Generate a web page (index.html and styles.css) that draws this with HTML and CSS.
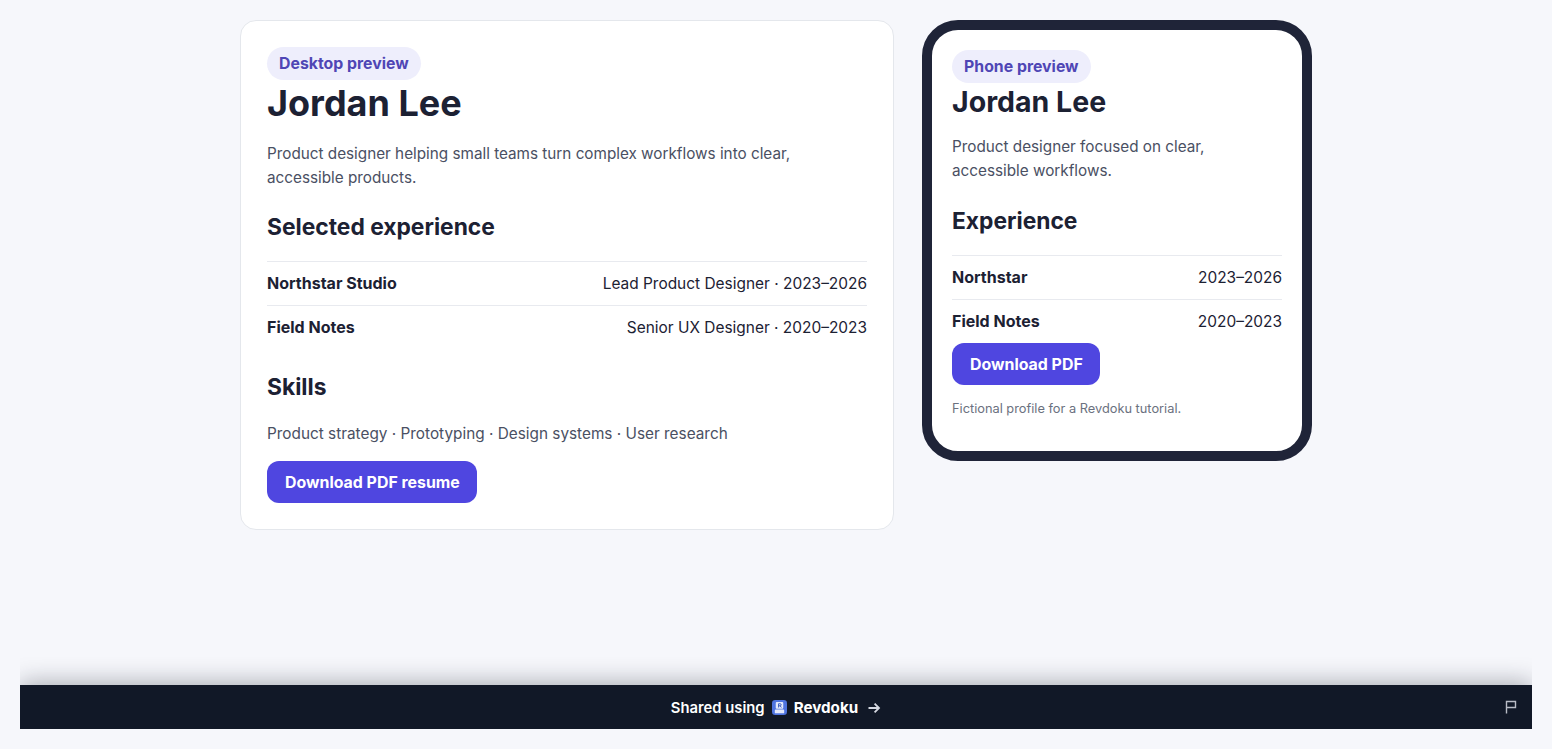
FILE: index.html
```html
<!DOCTYPE html>
<html lang="en">
<head>
    <meta charset="UTF-8">
    <meta name="viewport" content="width=device-width, initial-scale=1.0">
    <title>Jordan Lee - Resume preview</title>
    <link rel="stylesheet" href="styles.css">
</head>
<body>
    <main class="previews">
        <section class="card desktop">
            <span class="badge">Desktop preview</span>
            <h1>Jordan Lee</h1>
            <p class="intro">Product designer helping small teams turn complex workflows into clear, accessible products.</p>
            <h2>Selected experience</h2>
            <div class="row"><strong>Northstar Studio</strong><span>Lead Product Designer · 2023–2026</span></div>
            <div class="row"><strong>Field Notes</strong><span>Senior UX Designer · 2020–2023</span></div>
            <h2 class="skills-title">Skills</h2>
            <p class="skills">Product strategy · Prototyping · Design systems · User research</p>
            <a class="button" href="#">Download PDF resume</a>
        </section>
        <section class="card phone">
            <span class="badge">Phone preview</span>
            <h1>Jordan Lee</h1>
            <p class="intro">Product designer focused on clear, accessible workflows.</p>
            <h2>Experience</h2>
            <div class="row"><strong>Northstar</strong><span>2023–2026</span></div>
            <div class="row"><strong>Field Notes</strong><span>2020–2023</span></div>
            <a class="button" href="#">Download PDF</a>
            <p class="note">Fictional profile for a Revdoku tutorial.</p>
        </section>
    </main>
    <div class="share-wrap">
        <footer class="share-bar">
            <a class="share-link" href="#">
                <span>Shared using</span>
                <svg class="logo" viewBox="0 0 16 16" aria-hidden="true">
                    <rect width="16" height="16" rx="3.5" fill="#4f74e0"/>
                    <rect x="4" y="2.2" width="8" height="7" rx="1" fill="#e4eafc"/>
                    <rect x="3" y="10.2" width="10" height="4" rx="1" fill="#e4eafc"/>
                    <path d="M7 8V4h1.7a1.1 1.1 0 0 1 0 2.2H7M8.7 6.2 10 8" fill="none" stroke="#3557bd" stroke-width="1"/>
                </svg>
                <span class="brand">Revdoku</span>
                <svg class="arrow" viewBox="0 0 14 14" aria-hidden="true">
                    <path d="M1.5 7h10.5M7.6 2.6 12 7l-4.4 4.4" fill="none" stroke="currentColor" stroke-width="1.8"/>
                </svg>
            </a>
            <svg class="flag" viewBox="0 0 12 14" aria-hidden="true">
                <path d="M1.5 13.5V1.5h9v6h-9" fill="none" stroke="currentColor" stroke-width="1.4"/>
            </svg>
        </footer>
    </div>
</body>
</html>
```
FILE: styles.css
```css
* {
    box-sizing: border-box;
}
body {
    font-family: Inter, "Noto Sans", sans-serif;
    margin: 0;
    padding: 20px;
    min-height: 749px;
    background-color: #f6f7fb;
    color: #1c2133;
    display: flex;
    flex-direction: column;
    font-size: 15.35px;
    line-height: 24px;
}
.previews {
    display: flex;
    justify-content: center;
    align-items: flex-start;
    gap: 28px;
}
.card {
    background: white;
}
.desktop {
    width: 654px;
    height: 510px;
    padding: 26px;
    border: 1px solid #e4e7ec;
    border-radius: 16px;
}
.phone {
    width: 390px;
    height: 441px;
    padding: 20px;
    border: 10px solid #1f2438;
    border-radius: 36px;
}
.badge {
    display: inline-block;
    padding: 4px 12px;
    border-radius: 999px;
    background: #eeeefc;
    color: #4f46b5;
    font-size: 15.85px;
    line-height: 25px;
    font-weight: 650;
}
h1 {
    margin: 0;
    font-size: 36px;
    line-height: 46px;
    font-weight: 700;
}
.phone h1 {
    font-size: 28.5px;
    line-height: 38px;
}
.intro {
    margin: 16px 0 0;
    font-size: 15.27px;
    color: #4a5063;
}
.phone .intro {
    margin-top: 14px;
}
h2 {
    margin: 22px 0 19px;
    font-size: 22.8px;
    line-height: 30px;
    font-weight: 700;
}
.phone h2 {
    margin-top: 23px;
}
.row {
    display: flex;
    justify-content: space-between;
    align-items: baseline;
    height: 44px;
    padding: 9px 0;
    border-top: 1px solid #e8eaef;
    font-size: 15.45px;
}
.row strong {
    font-size: 16px;
    font-weight: 650;
}
.skills-title {
    margin-top: 23px;
    margin-bottom: 20px;
}
.skills {
    margin: 0 0 15px;
    color: #4a5063;
}
.button {
    display: inline-block;
    padding: 10px 17.5px 8px 18px;
    border-radius: 12px;
    background: #4f46e0;
    color: white;
    font-size: 15.9px;
    font-weight: 650;
    text-decoration: none;
}
.note {
    margin: 12px 0 0;
    font-size: 12.8px;
    line-height: 24px;
    color: #6b7180;
}
.share-wrap {
    margin-top: auto;
    padding-top: 28px;
    overflow: hidden;
}
.share-bar {
    position: relative;
    height: 44px;
    background: #111827;
    color: white;
    display: flex;
    align-items: center;
    justify-content: center;
    box-shadow: 0 -2px 24px rgba(17, 24, 39, 0.35);
    font-size: 14.8px;
}
.share-link {
    display: flex;
    align-items: center;
    padding-top: 1px;
    color: white;
    text-decoration: none;
    font-weight: 600;
}
.brand {
    font-size: 15.2px;
    font-weight: 700;
}
.logo {
    width: 15px;
    height: 15px;
    margin: 0 7px;
}
.arrow {
    width: 14px;
    height: 14px;
    margin-left: 9px;
    color: #d6d9e2;
}
.flag {
    position: absolute;
    right: 15px;
    top: 15px;
    width: 12px;
    height: 14px;
    color: #b9bcc6;
}
```
